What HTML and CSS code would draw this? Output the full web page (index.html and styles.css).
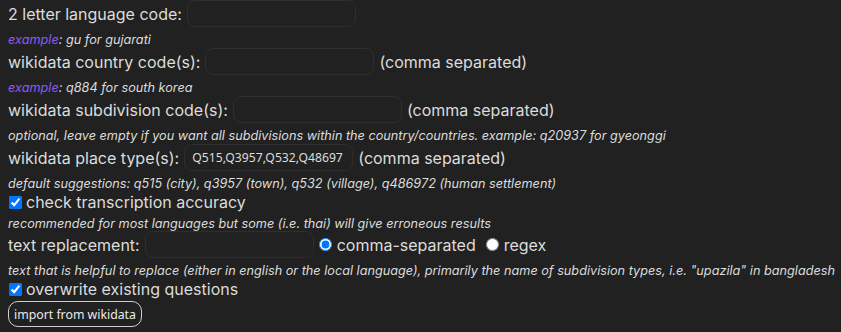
FILE: index.html
```html
<!DOCTYPE html>
<html>
<head>
<meta charset="utf-8">
<link rel="stylesheet" href="styles.css">
</head>
<body>
<div class="form">
  <div class="row"><span>2 letter language code:</span><input class="field" type="text"></div>
  <div class="hint"><span class="accent">example</span>: gu for gujarati</div>
  <div class="row"><span>wikidata country code(s):</span><input class="field" type="text"><span>(comma separated)</span></div>
  <div class="hint"><span class="accent">example</span>: q884 for south korea</div>
  <div class="row"><span>wikidata subdivision code(s):</span><input class="field" type="text"><span>(comma separated)</span></div>
  <div class="hint">optional, leave empty if you want all subdivisions within the country/countries. example: q20937 for gyeonggi</div>
  <div class="row"><span>wikidata place type(s):</span><input class="field" type="text" value="Q515,Q3957,Q532,Q48697"><span>(comma separated)</span></div>
  <div class="hint">default suggestions: q515 (city), q3957 (town), q532 (village), q486972 (human settlement)</div>
  <label class="check"><input type="checkbox" checked>check transcription accuracy</label>
  <div class="hint">recommended for most languages but some (i.e. thai) will give erroneous results</div>
  <div class="row"><span>text replacement:</span><input class="field" type="text"><label class="radio"><input type="radio" name="mode" checked>comma-separated</label><label class="radio"><input type="radio" name="mode">regex</label></div>
  <div class="hint">text that is helpful to replace (either in english or the local language), primarily the name of subdivision types, i.e. "upazila" in bangladesh</div>
  <label class="check"><input type="checkbox" checked>overwrite existing questions</label>
  <div class="actions"><button class="btn">import from wikidata</button></div>
</div>
</body>
</html>
```
FILE: styles.css
```css
html, body {
  margin: 0;
  background: #212121;
}
body {
  color: #dcdcdc;
  font-family: Inter, "Noto Sans", sans-serif;
  font-size: 16px;
}
.form {
  padding: 0 8px;
  display: flex;
  flex-direction: column;
}
.row {
  display: flex;
  align-items: center;
  gap: 5px;
  height: 27px;
  white-space: nowrap;
}
.field {
  box-sizing: border-box;
  width: 169px;
  height: 27px;
  margin: 0;
  background: #212121;
  border: 1px solid #2e2e2e;
  border-radius: 8px;
  color: #dcdcdc;
  font-family: "Noto Sans", sans-serif;
  font-size: 12.2px;
  padding: 0 4px 0 7px;
  outline: none;
}
.hint {
  font-size: 12.7px;
  font-style: italic;
  height: 21px;
  line-height: 26px;
  white-space: nowrap;
}
.check + .hint {
  height: 19px;
  line-height: 24px;
}
.accent { color: #8a5cf5; }
.check {
  display: flex;
  align-items: center;
  height: 20px;
  line-height: 20px;
}
.check input {
  margin: 0 4px 0 1px;
  width: 13px;
  height: 13px;
}
.radio {
  display: flex;
  align-items: center;
  margin-left: 5px;
}
.field + .radio {
  margin-left: 0;
}
.radio input {
  margin: 0 5px 0 0;
  width: 13px;
  height: 13px;
}
.actions {
  padding-top: 2px;
}
.btn {
  height: 26px;
  padding: 0 5px;
  background: #212121;
  color: #eaeaea;
  border: 1px solid #d0d0d0;
  border-radius: 10px;
  font-family: "Noto Sans", sans-serif;
  font-size: 12.3px;
}
```
